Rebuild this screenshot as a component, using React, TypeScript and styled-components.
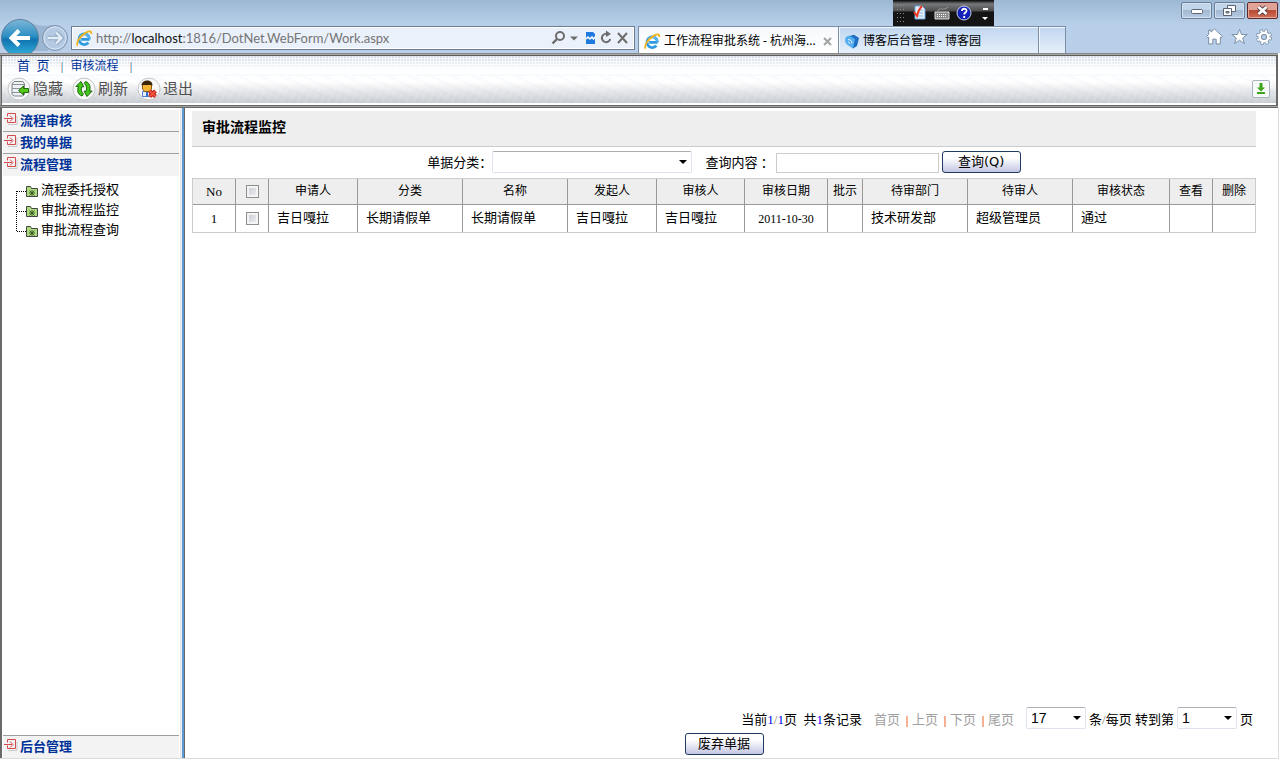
import React from 'react';
import styled, { createGlobalStyle } from 'styled-components';

const cjk = '"Liberation Serif", "Noto Sans CJK SC", serif';
const ui = '"Noto Sans", "Noto Sans CJK SC", sans-serif';

const GlobalStyle = createGlobalStyle`
  * { box-sizing: border-box; }
  body { margin: 0; background: #fff; color: #000; font: 13px/20px ${cjk}; }
  button, input, select { font: inherit; color: inherit; }
  h1, h2, p, ul { margin: 0; padding: 0; }
  a { color: inherit; text-decoration: none; }
`;

const Page = styled.div`
  display: flex;
  flex-direction: column;
  min-height: 100vh;
`;

/* ---------- browser chrome ---------- */

const Chrome = styled.header`
  position: relative;
  display: flex;
  align-items: flex-end;
  height: 53px;
  background: linear-gradient(#9db8d3, #b9d0ea 26px, #b9cfe9);
  font-family: ${ui};
`;

const NavButtons = styled.div`
  flex: none;
  width: 71px;
  height: 35px;
  svg { display: block; }
`;

const AddressBar = styled.form`
  flex: none;
  display: flex;
  align-items: center;
  gap: 3px;
  width: 564px;
  height: 24px;
  margin: 0 3px 3px 0;
  padding: 0 5px 0 4px;
  border: 1px solid #6f7f92;
  background: #eaf1fb;
  box-shadow: inset 0 0 0 1px #fff;
  svg { display: block; flex: none; }
`;

const AddressText = styled.div`
  flex: 1;
  color: #757575;
  font: 13px/20px Lato, "Noto Sans", sans-serif;
  white-space: nowrap;
  span { color: #111; }
`;

const Tab = styled.div<{ $active?: boolean; $width: number }>`
  flex: none;
  display: flex;
  align-items: center;
  gap: 3px;
  width: ${p => p.$width}px;
  height: 27px;
  padding: 2px 6px 0 5px;
  border: solid #7b8ea6;
  border-width: 1px 1px 0 ${p => (p.$active ? 1 : 0)}px;
  background: ${p => (p.$active ? 'linear-gradient(#f6f9fd, #fff)' : 'linear-gradient(#c0d6ef, #e6f0fb)')};
  box-shadow: inset 1px 1px 0 #f2f8ff;
  font-size: 12px;
  line-height: 20px;
  white-space: nowrap;
  svg { flex: none; }
`;

const TabTitle = styled.span`
  flex: 1;
`;

const BrowserTools = styled.div`
  display: flex;
  align-items: center;
  gap: 8px;
  margin: 0 8px 8px auto;
  svg { display: block; }
`;

const WindowButtons = styled.div`
  position: absolute;
  top: 2px;
  right: 2px;
  display: flex;
  gap: 2px;
`;

const WindowButton = styled.button<{ $close?: boolean }>`
  display: grid;
  place-items: center;
  width: 31px;
  height: 17px;
  padding: 0;
  border: 1px solid ${p => (p.$close ? '#5c2a2a' : '#6c7f98')};
  border-radius: 2px;
  box-shadow: inset 0 0 0 1px ${p => (p.$close ? '#e6a79a' : '#d3e2f3')};
  background: ${p =>
    p.$close
      ? 'linear-gradient(#dfa296 45%, #b94a34 50%, #d07058)'
      : 'linear-gradient(#c2d4e8 45%, #a3b9d2 50%, #b6cbe2)'};
`;

const LanguageBar = styled.div`
  position: absolute;
  top: 0;
  left: 893px;
  width: 101px;
  height: 26px;
  background: linear-gradient(#050505, #77797c 4px, #4c4c4c 11px, #141414 12px);
  svg { display: block; }
`;

/* ---------- page frames ---------- */

const TopFrame = styled.div`
  margin-right: 2px;
  padding: 3px 2px;
  background:
    linear-gradient(#8a8a8a 1px, #a6a6a6 1px 2px, #5f5f5f 2px) top / 100% 3px no-repeat,
    linear-gradient(#696969 1px, #a0a0a0 1px 2px, #696969 2px) bottom / 100% 3px no-repeat,
    linear-gradient(90deg, #a0a0a0 1px, #696969 1px) left / 2px 100% no-repeat,
    linear-gradient(#696969, #696969) right / 2px 100% no-repeat;
`;

const MenuRow = styled.nav`
  display: flex;
  align-items: center;
  height: 20px;
  padding-left: 15px;
  color: #003399;
  line-height: 20px;
  background:
    linear-gradient(rgba(255, 255, 255, 0), #fff 14px 17px, #f4f9fd),
    radial-gradient(circle at 1px 1px, #d3d9e6 1px, transparent 1px) 0 0 / 3px 3px,
    #f4f7fb;
`;

const MenuLink = styled.a<{ $small?: boolean }>`
  font-size: ${p => (p.$small ? 12 : 13)}px;
`;

const Divider = styled.span`
  width: 2px;
  height: 11px;
  margin: 3px 8px 0 11px;
  background: linear-gradient(90deg, #f9c3a8 1px, #74ccf7 1px);
`;

const ToolRow = styled.div`
  display: flex;
  align-items: center;
  height: 29px;
  padding: 0 6px 2px 4px;
  background:
    repeating-linear-gradient(115deg, rgba(255, 255, 255, 0) 0 4px, rgba(255, 255, 255, 0.1) 6px 7px),
    repeating-linear-gradient(25deg, rgba(140, 155, 175, 0) 0 5px, rgba(140, 155, 175, 0.04) 7px 9px),
    linear-gradient(#fff 6px, #e4e6e9 16px, #c8cdd3);
  border-bottom: 2px solid #fff;
`;

const ToolButton = styled.button`
  display: flex;
  align-items: center;
  gap: 2px;
  width: 65px;
  padding: 0;
  border: 0;
  background: none;
  color: #505050;
  font-size: 15px;
  line-height: 22px;
  white-space: nowrap;
  svg { flex: none; }
`;

const DownloadButton = styled.button`
  display: grid;
  place-items: center;
  width: 18px;
  height: 18px;
  margin-left: auto;
  padding: 0;
  border: 1px solid #a9b4bf;
  border-radius: 2px;
  background: #f7faf9;
`;

const Body = styled.div`
  flex: 1;
  display: flex;
  margin: 0 1px 1px 0;
  border: solid #dcdcdc;
  border-width: 0 1px 1px 0;
`;

const Sidebar = styled.aside`
  flex: none;
  display: flex;
  flex-direction: column;
  width: 181px;
  padding: 2px 1px 0 1px;
  border-left: 2px solid #696969;
  border-right: 1px solid #e3e3e3;
`;

const Splitter = styled.div`
  flex: none;
  width: 4px;
  background: linear-gradient(90deg, #f0f0f0 1px, #5b9bd5 1px 3px, #696969 3px);
`;

const GroupTitle = styled.h2<{ $line?: 'top' | 'bottom' }>`
  display: flex;
  align-items: center;
  gap: 2px;
  height: ${p => (p.$line === 'top' ? 23 : 22)}px;
  background: #f3f3f3;
  border-${p => p.$line || 'bottom'}: ${p => (p.$line ? '1px solid #9f9f9f' : '0')};
  color: #003399;
  font-size: 13px;
  line-height: 20px;
  svg { margin-bottom: 4px; }
`;

const Tree = styled.ul`
  flex: 1;
  padding: 4px 0 0 13px;
  list-style: none;
`;

const TreeItem = styled.li`
  display: flex;
  align-items: center;
  gap: 2px;
  height: 20px;
  svg { flex: none; }
`;

const Main = styled.main`
  flex: 1;
  min-width: 0;
  display: flex;
  flex-direction: column;
  padding: 3px 22px 3px 7px;
`;

const PageTitle = styled.h1`
  height: 36px;
  padding-left: 10px;
  border-bottom: 1px solid #ccc;
  background: #eee;
  font-size: 14px;
  line-height: 33px;
`;

const Filters = styled.form`
  display: flex;
  align-items: flex-end;
  justify-content: center;
  height: 26px;
  margin-bottom: 5px;
`;

const FieldLabel = styled.label`
  white-space: pre;
`;

const SelectBox = styled.span<{ $width: number }>`
  position: relative;
  display: inline-block;
  width: ${p => p.$width}px;
  height: 22px;
  &::after {
    content: '';
    position: absolute;
    top: 9px;
    right: 5px;
    border: solid transparent;
    border-width: 4px 4px 0;
    border-top-color: #000;
    pointer-events: none;
  }
  select {
    display: block;
    width: 100%;
    height: 22px;
    padding: 0 4px;
    appearance: none;
    border: 1px solid #dfe3ee;
    border-top-color: #aeaeb4;
    border-radius: 2px;
    background: #fff;
    font: 14px/20px "Liberation Sans", sans-serif;
  }
`;

const TextInput = styled.input`
  width: 163px;
  height: 20px;
  margin: 0 3px 0 2px;
  padding: 0 3px;
  border: 1px solid #ccc;
`;

const PushButton = styled.button`
  width: 79px;
  height: 22px;
  padding: 0;
  border: 1px solid #1f3a63;
  border-radius: 3px;
  background: linear-gradient(#fff 30%, #e4e6f3 60%, #c3c6e0);
  font: 13px/18px "DejaVu Sans", "Noto Sans CJK SC", sans-serif;
`;

const Grid = styled.table`
  width: 100%;
  table-layout: fixed;
  border: 1px solid #ccc;
  border-collapse: separate;
  border-spacing: 0;
  th, td {
    padding: 0 0 2px;
    border-right: 1px solid #999;
    white-space: nowrap;
    overflow: hidden;
  }
  th:last-child, td:last-child { border-right: 0; }
  th {
    height: 26px;
    border-bottom: 1px solid #999;
    background: #eee;
    font-size: 12px;
    font-weight: 400;
    text-align: center;
  }
  td { height: 27px; padding-left: 8px; }
  td.center { padding: 0; font-size: 12px; text-align: center; }
  th:nth-child(-n + 2) { padding: 0; }
  th:first-child, td.center:first-child { font-size: 13px; }
`;

const Check = styled.input`
  display: block;
  width: 13px;
  height: 13px;
  margin: 0 auto;
  appearance: none;
  border: 1px solid #8e8f8f;
  background: linear-gradient(135deg, #c4c8d0, #f4f4f6);
  box-shadow: inset 0 0 0 2px #f4f4f4;
`;

const Footer = styled.footer`
  margin-top: auto;
  display: flex;
  flex-direction: column;
`;

const Pager = styled.div`
  display: flex;
  align-items: center;
  justify-content: flex-end;
  height: 24px;
  margin-bottom: 3px;
  white-space: nowrap;
  p { margin-right: 12px; white-space: pre; padding-top: 4px; }
  b { font-weight: 400; color: #0000f0; }
  i { font-style: normal; color: #8a7a6a; }
  label { margin: 0 3px; padding-top: 4px; }
`;

const PagerLink = styled.a`
  padding-top: 4px;
  color: #a0a0a0;
  &:last-of-type { margin-right: 12px; }
`;

const PagerDivider = styled.span`
  width: 2px;
  height: 11px;
  margin: 6px 4px 0 6px;
  background: #f7b090;
`;

const Actions = styled.div`
  text-align: center;
  line-height: 0;
`;

/* ---------- drawings ---------- */

const IeIcon = () => (
  <svg width="17" height="17" viewBox="0 0 17 17" fill="none">
    <path d="M13.6 9.3H5.2M13.6 9.3A5.3 5.3 0 1 0 12.4 12.6" stroke="#2f9be0" strokeWidth="2.8" />
    <path d="M13.6 8.6A5.3 5.3 0 0 0 4.4 6" stroke="#7dcbf5" strokeWidth="1" />
    <path d="M1.6 15.6C-.6 12.6 4.6 5.6 10.4 2.4c3-1.6 5.4-1.4 4.8 1.6" stroke="#f0b51d" strokeWidth="1.8" />
  </svg>
);

const BlogIcon = () => (
  <svg width="16" height="15" viewBox="0 0 16 15" fill="none">
    <path d="M4 2.500 10 .8 15 4l-2 8-4 2.500z" fill="#1f6fc0" />
    <path d="M1 5.500C1 3 3 2 5 1.500L11 5l-2 9.500L3.500 11C1.500 9.500 1 7.500 1 5.500z" fill="#56aef2" />
    <path d="M4 5.500c2.400 0 4 1.600 4 4M4 8c1 0 1.700.7 1.700 1.700" stroke="#e8f6ff" />
  </svg>
);

const BackForward = () => (
  <svg width="71" height="35" viewBox="0 0 71 35" fill="none">
    <defs>
      <linearGradient id="back" x1="0" y1="0" x2="0" y2="1">
        <stop offset="0" stopColor="#7cb7d8" />
        <stop offset=".45" stopColor="#2d8fc4" />
        <stop offset=".55" stopColor="#0f74b0" />
        <stop offset="1" stopColor="#36b4e0" />
      </linearGradient>
    </defs>
    <path d="M26 2C36 9 45 8 54 7l-6 26H30z" fill="#8fabc9" opacity=".7" />
    <circle cx="20" cy="20" r="18.500" fill="url(#back)" stroke="#5f7f9c" />
    <path d="M30 20H12M19 12.500 11.500 20l7.500 7.500" stroke="#fff" strokeWidth="4" />
    <circle cx="55" cy="20" r="12.500" fill="#b4cae3" stroke="#7e93ad" />
    <circle cx="55" cy="20" r="11" stroke="#d5e3f2" />
    <path d="M48 20h13M56 14.500l5.500 5.500-5.500 5.500" stroke="#8ea4be" strokeWidth="4.400" />
    <path d="M48 20h13M56 14.500l5.500 5.500-5.500 5.500" stroke="#e3edf8" strokeWidth="2.400" />
  </svg>
);

const AddressIcons = () => (
  <svg width="78" height="16" viewBox="0 0 78 16" fill="none" stroke="#6d6d6d" strokeWidth="2">
    <circle cx="9" cy="6" r="4" />
    <path d="M6 9 1.500 13.500" strokeWidth="2.400" />
    <path d="M19 6.500h8l-4 4z" fill="#6d6d6d" stroke="none" />
    <path d="M35 2h7l2 2v10h-9z" fill="#1f7ae0" stroke="none" />
    <path d="M35 9l2-2 2 2 2-2 1.500 2 1.500-2" stroke="#fff" strokeWidth="1.500" />
    <path d="M57.500 4.500A4.200 4.200 0 1 0 59.200 9" />
    <path d="M55 0.500v6.500l5-3z" fill="#6d6d6d" stroke="none" />
    <path d="m67 3 9 10M76 3l-9 10" />
  </svg>
);

const HomeIcon = () => (
  <svg width="17" height="17" viewBox="0 0 16 16" fill="#fff" stroke="#7388a1" strokeWidth=".9">
    <path d="M8 .8 15.500 8l-1.300 1.200-.7-.6V15H9.600v-4.500H6.400V15H2.500V8.600l-.7.600L.5 8l2-2V2h2.300v1.800z" />
  </svg>
);
const StarIcon = () => (
  <svg width="17" height="17" viewBox="0 0 17 16" fill="#fff" stroke="#7388a1" strokeWidth=".9">
    <path d="m8.500.8 2 5.200h5.700l-4.500 3.500 1.700 5.600-4.900-3.400-4.900 3.400 1.700-5.600L.8 6h5.700z" />
  </svg>
);
const GearIcon = () => (
  <svg width="16" height="16" viewBox="0 0 16 16" fill="none">
    <circle cx="8" cy="8" r="6.400" stroke="#7388a1" strokeWidth="3.200" strokeDasharray="3 2.026" />
    <circle cx="8" cy="8" r="4.200" stroke="#7388a1" strokeWidth="4.200" />
    <circle cx="8" cy="8" r="6.300" stroke="#fff" strokeWidth="2" strokeDasharray="2 2.948" strokeDashoffset="-.5" />
    <circle cx="8" cy="8" r="4.300" stroke="#fff" strokeWidth="2.600" />
  </svg>
);

const LanguageDrawing = () => (
  <svg width="101" height="26" viewBox="0 0 101 26" fill="none">
    <g stroke="#8c8c8c" strokeDasharray="1 2">
      <path d="M4 5.500h8M4 9.500h8M4 13.500h8M4 17.500h8M4 21.500h8" />
    </g>
    <path d="M22 6h7l3 3v10H22z" fill="#e4effb" stroke="#6aa5e0" />
    <path d="M25 10h5M25 13h5M25 16h5" stroke="#8ab9ea" />
    <path d="m21 12 3 4c1-4 2-7 5-10" stroke="#f0351c" strokeWidth="2" />
    <path d="M42 12h14v7H42z" fill="#888" stroke="#ddd" />
    <path d="M44 14.500h10M44 16.500h10" stroke="#fff" strokeDasharray="1 1" />
    <path d="M45 11c0-4 8 0 10-4" stroke="#999" />
    <circle cx="71" cy="13" r="7" fill="#1220b8" stroke="#c8cce8" />
    <path d="M69 11c0-3 5-3 4.500 0-.2 1.500-2.300 1.600-2.300 3.500M71.200 16v2" stroke="#fff" strokeWidth="1.800" />
    <path d="M90 8h5v2h-5zM89 17h6l-3 3z" fill="#fff" />
  </svg>
);

const Disc = ({ children }: { children: React.ReactNode }) => (
  <svg width="25" height="24" viewBox="0 0 25 24" fill="none">
    <g transform="translate(1 0)">
      <circle cx="12" cy="12" r="11" fill="#f8f8f8" stroke="#c4c6c9" />
      {children}
    </g>
  </svg>
);

const HideIcon = () => (
  <Disc>
    <path d="M5 7 7 4.500h9L17.500 7v10.500l-2 1.500H7l-2-1.500z" fill="#eef0f3" stroke="#7a828a" />
    <path d="M5 7.500h12M5 11.500h12M5 15.500h12" stroke="#8b939b" />
    <path d="m11.500 13.500 5-4.500v2.500h5v4h-5V18z" fill="#58c81c" stroke="#1c6e08" />
  </Disc>
);
const RefreshIcon = () => (
  <Disc>
    <path d="M10 19C5.500 17.500 5 13 6.500 9.500H3.800L9 4.500l2.800 5.300H9.800C9 12.500 9 15 11.500 17z" fill="#45c81c" stroke="#17650c" />
    <path d="M13.500 4.500c4.500 1.500 5.300 6 4 9.500h2.700L15 19.500l-3-5.300h2.200c.8-2.700.6-5.700-2-7.700z" fill="#45c81c" stroke="#17650c" />
  </Disc>
);
const ExitIcon = () => (
  <Disc>
    <path d="M5.500 19.500v-5h9v5z" fill="#e6eefb" stroke="#4a7fd0" />
    <path d="M9 14.500h2v5H9z" fill="#2d6fd2" />
    <path d="M5.500 7.500h9V12l-2 2.500h-5L5.500 12z" fill="#f2b632" stroke="#8a5a10" />
    <path d="M4.500 8.500c0-6 11-7 11 0l-2-.5h-7z" fill="#3a2508" />
    <path d="m12.500 14 6 5.500M18.500 14l-6 5.500" stroke="#b3150c" strokeWidth="3.800" />
    <path d="m12.500 14 6 5.500M18.500 14l-6 5.500" stroke="#f2543d" strokeWidth="2" />
  </Disc>
);

const EnterIcon = () => (
  <svg width="15" height="14" viewBox="0 0 15 14" fill="none" stroke="#d4494d">
    <path d="M5 12.500h9v-9" stroke="#c9c9c9" />
    <path d="M4.500 4.500v-3h8v9h-8v-3M1 6.500h8M7 3.500l3 3-3 3" />
  </svg>
);

const TreeIcon = ({ first, last }: { first?: boolean; last?: boolean }) => (
  <svg width="23" height="20" viewBox="0 0 23 20" fill="none" stroke="#000" strokeDasharray="1 1">
    <path d={`M.5 ${first ? 11 : 0}V${last ? 12 : 20}`} />
    <path d="M1 11.500h9" />
    <path d="M10.500 6.500h4l1 2h6v8h-11z" fill="#b0dc80" stroke="#444" strokeDasharray="none" />
    <path d="m13.500 10.500 5 5M18.500 10.500l-5 5M16 10v6M13 13h6" stroke="#34501f" strokeWidth=".9" strokeDasharray="none" />
  </svg>
);

/* ---------- data ---------- */

const columns: [string, number][] = [
  ['No', 43], ['', 33], ['申请人', 89], ['分类', 105], ['名称', 105], ['发起人', 89], ['审核人', 88],
  ['审核日期', 83], ['批示', 35], ['待审部门', 105], ['待审人', 105], ['审核状态', 97], ['查看', 43], ['删除', 42],
];

const rows = [
  ['1', '', '吉日嘎拉', '长期请假单', '长期请假单', '吉日嘎拉', '吉日嘎拉', '2011-10-30', '', '技术研发部', '超级管理员', '通过', '', ''],
];

const treeItems = ['流程委托授权', '审批流程监控', '审批流程查询'];

export default function App() {
  return (
    <Page>
      <GlobalStyle />
      <Chrome>
        <NavButtons><BackForward /></NavButtons>
        <AddressBar>
          <IeIcon />
          <AddressText>http://<span>localhost</span>:1816/DotNet.WebForm/Work.aspx</AddressText>
          <AddressIcons />
        </AddressBar>
        <Tab $active $width={201}>
          <IeIcon />
          <TabTitle>工作流程审批系统 - 杭州海...</TabTitle>
          <svg width="9" height="9" viewBox="0 0 9 9" stroke="#a3a3a3" strokeWidth="2"><path d="m1 1 7 7M8 1 1 8" /></svg>
        </Tab>
        <Tab $width={200}>
          <BlogIcon />
          <TabTitle>博客后台管理 - 博客园</TabTitle>
        </Tab>
        <Tab $width={27} />
        <BrowserTools><HomeIcon /><StarIcon /><GearIcon /></BrowserTools>
        <LanguageBar><LanguageDrawing /></LanguageBar>
        <WindowButtons>
          <WindowButton aria-label="最小化">
            <svg width="12" height="6" viewBox="0 0 12 6"><rect x=".5" y="1.500" width="11" height="4" rx="1" fill="#fff" stroke="#5a6473" /></svg>
          </WindowButton>
          <WindowButton aria-label="还原">
            <svg width="13" height="11" viewBox="0 0 13 11" fill="#fff" stroke="#5a6473">
              <path d="M4.500.5h8v6h-8z" /><path d="M.5 3.500h8v7h-8z" /><path d="M3 6.500h3v1.500H3z" fill="#a9bdd6" />
            </svg>
          </WindowButton>
          <WindowButton $close aria-label="关闭">
            <svg width="13" height="11" viewBox="0 0 13 11" fill="none">
              <path d="m2.500 2 8 7M10.500 2l-8 7" stroke="#574047" strokeWidth="4.400" />
              <path d="m2.500 2 8 7M10.500 2l-8 7" stroke="#fff" strokeWidth="2.600" />
            </svg>
          </WindowButton>
        </WindowButtons>
      </Chrome>

      <TopFrame>
        <MenuRow>
          <MenuLink href="#">首&nbsp; 页</MenuLink>
          <Divider />
          <MenuLink href="#" $small>审核流程</MenuLink>
          <Divider />
        </MenuRow>
        <ToolRow>
          <ToolButton><HideIcon />隐藏</ToolButton>
          <ToolButton><RefreshIcon />刷新</ToolButton>
          <ToolButton><ExitIcon />退出</ToolButton>
          <DownloadButton aria-label="展开">
            <svg width="8" height="11" viewBox="0 0 8 11" fill="#3fa51c"><path d="M2.500 0h3v4.500H8L4 8.500 0 4.500h2.500zM0 9h8v2H0z" /></svg>
          </DownloadButton>
        </ToolRow>
      </TopFrame>

      <Body>
        <Sidebar>
          <GroupTitle $line="bottom"><EnterIcon />流程审核</GroupTitle>
          <GroupTitle $line="bottom"><EnterIcon />我的单据</GroupTitle>
          <GroupTitle><EnterIcon />流程管理</GroupTitle>
          <Tree>
            {treeItems.map((name, i) => (
              <TreeItem key={name}>
                <TreeIcon first={i === 0} last={i === treeItems.length - 1} />
                <a href="#">{name}</a>
              </TreeItem>
            ))}
          </Tree>
          <GroupTitle $line="top"><EnterIcon />后台管理</GroupTitle>
        </Sidebar>
        <Splitter />
        <Main>
          <PageTitle>审批流程监控</PageTitle>
          <Filters>
            <FieldLabel htmlFor="kind">单据分类：</FieldLabel>
            <SelectBox $width={200}><select id="kind"><option></option></select></SelectBox>
            <FieldLabel htmlFor="query">{'    查询内容 ：'}</FieldLabel>
            <TextInput id="query" type="text" />
            <PushButton type="button">查询(Q)</PushButton>
          </Filters>
          <Grid>
            <colgroup>{columns.map(([, w], i) => <col key={i} width={w} />)}</colgroup>
            <thead>
              <tr>{columns.map(([name], i) => <th key={i}>{i === 1 ? <Check type="checkbox" aria-label="全选" /> : name}</th>)}</tr>
            </thead>
            <tbody>
              {rows.map(row => (
                <tr key={row[0]}>
                  {row.map((cell, i) => (
                    <td key={i} className={i < 2 || i === 7 ? 'center' : undefined}>
                      {i === 1 ? <Check type="checkbox" aria-label="选择" /> : cell}
                    </td>
                  ))}
                </tr>
              ))}
            </tbody>
          </Grid>
          <Footer>
            <Pager>
              <p>当前<b>1</b><i>/</i><b>1</b>页{'  '}共<b>1</b>条记录</p>
              <PagerLink href="#">首页</PagerLink><PagerDivider />
              <PagerLink href="#">上页</PagerLink><PagerDivider />
              <PagerLink href="#">下页</PagerLink><PagerDivider />
              <PagerLink href="#">尾页</PagerLink>
              <SelectBox $width={60}><select id="size" aria-label="每页条数"><option>17</option></select></SelectBox>
              <label htmlFor="goto">条<i>/</i>每页 转到第</label>
              <SelectBox $width={60}><select id="goto"><option>1</option></select></SelectBox>
              <label htmlFor="goto">页</label>
            </Pager>
            <Actions><PushButton type="button">废弃单据</PushButton></Actions>
          </Footer>
        </Main>
      </Body>
    </Page>
  );
}
